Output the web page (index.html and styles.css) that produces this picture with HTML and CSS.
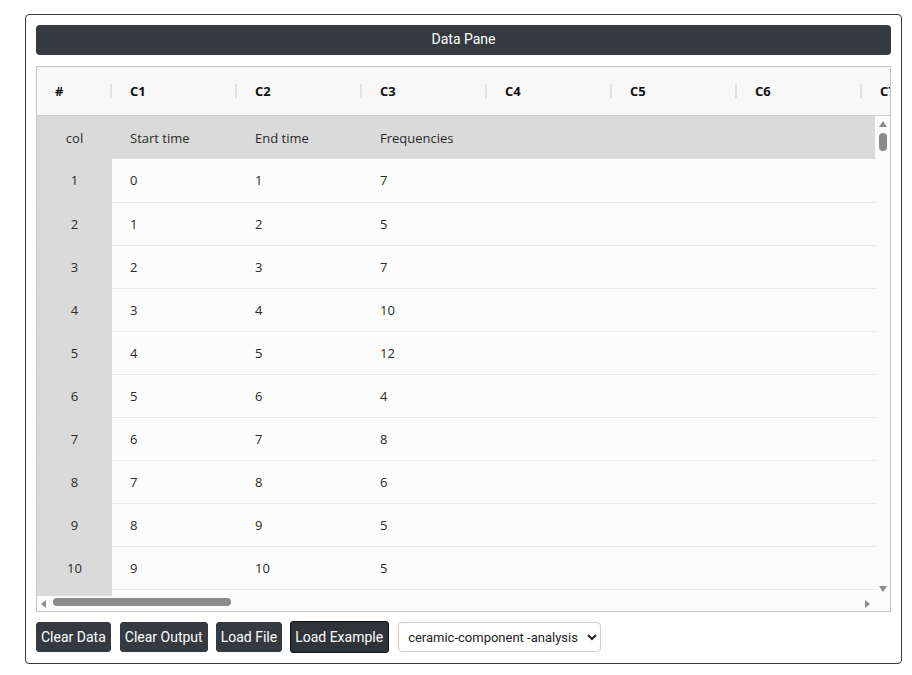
FILE: index.html
```html
<!DOCTYPE html>
<html lang="en">

<head>
    <meta charset="UTF-8">
    <meta name="viewport" content="width=device-width, initial-scale=1.0">
    <title>Data Pane</title>
    <link rel="stylesheet" href="styles.css">
</head>

<body>

    <div class="pane">
        <div class="pane-title">Data Pane</div>

        <div class="grid">
            <div class="grid-head">
                <div class="head-cell head-num">#</div>
                <div class="head-cell">C1</div>
                <div class="head-cell">C2</div>
                <div class="head-cell">C3</div>
                <div class="head-cell">C4</div>
                <div class="head-cell">C5</div>
                <div class="head-cell">C6</div>
                <div class="head-cell">C7</div>
            </div>

            <div class="grid-body">
                <div class="viewport">
                    <table class="data">
                        <colgroup>
                            <col class="col-num">
                            <col class="col-val">
                            <col class="col-val">
                            <col class="col-val">
                            <col>
                        </colgroup>
                        <tr class="names">
                            <td class="num">col</td>
                            <td>Start time</td>
                            <td>End time</td>
                            <td>Frequencies</td>
                            <td></td>
                        </tr>
                        <tr><td class="num">1</td><td>0</td><td>1</td><td>7</td><td></td></tr>
                        <tr><td class="num">2</td><td>1</td><td>2</td><td>5</td><td></td></tr>
                        <tr><td class="num">3</td><td>2</td><td>3</td><td>7</td><td></td></tr>
                        <tr><td class="num">4</td><td>3</td><td>4</td><td>10</td><td></td></tr>
                        <tr><td class="num">5</td><td>4</td><td>5</td><td>12</td><td></td></tr>
                        <tr><td class="num">6</td><td>5</td><td>6</td><td>4</td><td></td></tr>
                        <tr><td class="num">7</td><td>6</td><td>7</td><td>8</td><td></td></tr>
                        <tr><td class="num">8</td><td>7</td><td>8</td><td>6</td><td></td></tr>
                        <tr><td class="num">9</td><td>8</td><td>9</td><td>5</td><td></td></tr>
                        <tr><td class="num">10</td><td>9</td><td>10</td><td>5</td><td></td></tr>
                        <tr><td class="num"></td><td></td><td></td><td></td><td></td></tr>
                    </table>
                </div>

                <div class="vbar">
                    <span class="arrow"><i class="tri tri-up"></i></span>
                    <span class="thumb"></span>
                    <span class="track"></span>
                    <span class="arrow"><i class="tri tri-down"></i></span>
                </div>

                <div class="hbar">
                    <span class="arrow arrow-left"><i class="tri tri-left"></i></span>
                    <span class="thumb"></span>
                    <span class="track"></span>
                    <span class="arrow arrow-right"><i class="tri tri-right"></i></span>
                </div>

                <div class="corner"></div>
            </div>
        </div>

        <div class="actions">
            <button class="btn btn-first">Clear Data</button>
            <button class="btn">Clear Output</button>
            <button class="btn">Load File</button>
            <button class="btn btn-active">Load Example</button>
            <select class="examples">
                <option>ceramic-component -analysis</option>
            </select>
        </div>
    </div>

</body>

</html>
```

FILE: styles.css
```css
* {
    margin: 0;
    padding: 0;
    box-sizing: border-box;
}

body {
    font-family: 'Roboto', 'Liberation Sans', sans-serif;
    background: #fff;
    color: #222;
}

.pane {
    width: 877px;
    margin: 14px 0 0 25px;
    padding: 10px;
    border: 1px solid #3a3a3a;
    border-radius: 4px;
}

.pane-title {
    height: 30px;
    line-height: 29px;
    background-color: #343a40;
    color: #fff;
    font-size: 14px;
    text-align: center;
    border-radius: 4px;
    margin-bottom: 11px;
}

/* grid */

.grid {
    border: 1px solid #c6c6c6;
    font-family: 'Open Sans', 'Noto Sans', sans-serif;
    font-size: 13px;
}

.grid-head {
    display: flex;
    height: 49px;
    background: #f8f8f8;
    border-bottom: 1px solid #cfcfcf;
    overflow: hidden;
}

.head-cell {
    position: relative;
    flex: 0 0 125px;
    padding-left: 18px;
    line-height: 49px;
    font-weight: bold;
    font-size: 13px;
    color: #111;
}

.head-cell.head-num {
    flex-basis: 75px;
}

.head-cell::after {
    content: '';
    position: absolute;
    right: 0;
    top: 17px;
    width: 2px;
    height: 14px;
    background: #e2e2e2;
}

.grid-body {
    display: grid;
    grid-template-columns: 1fr 15px;
    grid-template-rows: 480px 15px;
    background: #fcfcfc;
}

.viewport {
    overflow: hidden;
}

.data {
    width: 100%;
    table-layout: fixed;
    border-collapse: collapse;
}

.col-num {
    width: 75px;
}

.col-val {
    width: 125px;
}

.data td {
    height: 43px;
    padding-left: 18px;
    border-bottom: 1px solid #e8e8e8;
    color: #2a2a2a;
    white-space: nowrap;
}

.data td.num {
    padding-left: 0;
    text-align: center;
    background: #dadada;
    border-bottom-color: #dcdcdc;
}

.data tr.names td {
    background: #dadada;
    border-bottom: none;
}

/* scrollbars */

.vbar,
.hbar {
    display: flex;
    background: #fbfbfb;
}

.vbar {
    flex-direction: column;
    align-items: center;
}

.arrow {
    display: flex;
    align-items: center;
    justify-content: center;
    flex: 0 0 15px;
    width: 15px;
    height: 15px;
}

.arrow-left {
    justify-content: flex-start;
    padding-left: 4px;
}

.arrow-right {
    justify-content: flex-end;
    padding-right: 5px;
}

.track {
    flex: 1;
}

.thumb {
    background: #8b8b8b;
    border-radius: 4px;
}

.vbar .thumb {
    width: 8px;
    height: 18px;
    margin-top: 2px;
}

.hbar .thumb {
    width: 178px;
    height: 8px;
    margin: 2px 0 0 1px;
}

.tri {
    width: 0;
    height: 0;
    border: 4px solid transparent;
}

.tri-up {
    border-top: 0;
    border-bottom: 6px solid #8b8b8b;
}

.tri-down {
    border-bottom: 0;
    border-top: 6px solid #8b8b8b;
}

.tri-left {
    border-left: 0;
    border-right: 5px solid #8b8b8b;
}

.tri-right {
    border-right: 0;
    border-left: 5px solid #8b8b8b;
}

.corner {
    background: #fbfbfb;
}

/* actions */

.actions {
    display: flex;
    align-items: center;
    gap: 8px;
    margin-top: 9px;
}

.btn {
    height: 30px;
    padding: 0 4px;
    font-family: 'Roboto', 'Liberation Sans', sans-serif;
    font-size: 14px;
    color: #fff;
    background-color: #343a40;
    border: 1px solid #343a40;
    border-radius: 3px;
    cursor: pointer;
}

.btn-first {
    margin-right: 1px;
}

.btn-active {
    height: 32px;
    padding: 0 5px 0 4px;
    border-color: #111;
    background-color: #2f3439;
}

.examples {
    width: 203px;
    height: 30px;
    margin-left: 1px;
    padding: 0 4px 0 5px;
    font-family: 'Roboto', 'Liberation Sans', sans-serif;
    font-size: 13px;
    color: #222;
    background: #fff;
    border: 1px solid #cfcfcf;
    border-radius: 4px;
}
```
